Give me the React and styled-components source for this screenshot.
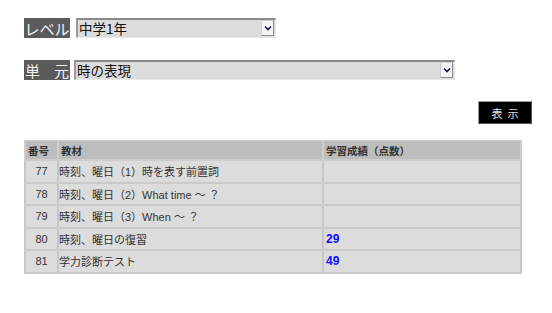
import React from "react";
import styled, { createGlobalStyle } from "styled-components";

const Global = createGlobalStyle`
  html, body { margin: 0; padding: 0; background: #ffffff; }
  body { font-family: "Liberation Sans", "Noto Sans CJK JP", sans-serif; }
`;

const Page = styled.div`
  width: 552px;
  height: 313px;
  box-sizing: border-box;
  padding: 18px 20px 0 24px;
  display: flex;
  flex-direction: column;
`;

const FieldRow = styled.div`
  display: flex;
  align-items: stretch;
  height: 20px;
  gap: ${(p) => p.$gap}px;
  margin-bottom: ${(p) => p.$mb}px;
`;

const Label = styled.div`
  width: 46px;
  height: 20px;
  box-sizing: border-box;
  background: #5b5b5b;
  color: #f2f2f2;
  font-family: "Noto Sans CJK JP", sans-serif;
  font-size: 15px;
  line-height: 1;
  display: flex;
  align-items: center;
  justify-content: ${(p) => (p.$spread ? "space-between" : "center")};
  padding: 0 ${(p) => (p.$spread ? 1 : 0)}px;
  white-space: nowrap;
`;

const SelectBox = styled.div`
  width: ${(p) => p.$w}px;
  height: 20px;
  box-sizing: border-box;
  display: flex;
  align-items: stretch;
  background: #dcdcdc;
  border-top: 2px solid #8a8a8a;
  border-left: 2px solid #9a9a9a;
  border-right: 1px solid #e8e8e8;
  border-bottom: 1px solid #e8e8e8;
`;

const NativeSelect = styled.select`
  flex: 1;
  appearance: none;
  -webkit-appearance: none;
  border: none;
  outline: none;
  background: transparent;
  font-family: "Noto Sans CJK JP", sans-serif;
  font-size: 13.5px;
  color: #111;
  padding: 0 0 0 1px;
  margin: 0;
  height: 100%;
  line-height: 17px;
`;

const ArrowBox = styled.div`
  width: 13px;
  margin: 0 1px 1px 0;
  box-sizing: border-box;
  background: #f4f4f4;
  border: 1px solid #8c8c8c;
  border-top-color: #cfcfcf;
  border-left-color: #cfcfcf;
  display: flex;
  align-items: center;
  justify-content: center;
`;

const ButtonRow = styled.div`
  display: flex;
  justify-content: flex-end;
  margin-bottom: 16px;
`;

const ShowButton = styled.button`
  width: 54px;
  height: 23px;
  background: #000;
  color: #e0e0e0;
  border: 1px solid #9a9a9a;
  border-right-color: #555;
  border-bottom-color: #555;
  font-family: "Noto Sans CJK JP", sans-serif;
  font-size: 11px;
  letter-spacing: 5px;
  padding: 0 0 0 5px;
  cursor: pointer;
`;

const Table = styled.table`
  width: 496px;
  border-collapse: collapse;
  table-layout: fixed;
  font-size: 11px;
  color: #333;
  border: 1px solid #c4c4c4;
`;

const Th = styled.th`
  height: 18px;
  background: #bdbdbd;
  text-align: left;
  font-weight: bold;
  padding: 0 0 0 2px;
  border: 2px solid #cdcdcd;
  border-top-width: 1px;
  color: #333;
  font-family: "Noto Sans CJK JP", sans-serif;
  font-size: 10.5px;
`;

const Td = styled.td`
  height: 20.5px;
  background: #dcdcdc;
  padding: 0;
  text-align: ${(p) => (p.$center ? "center" : "left")};
  border: 2px solid #c6c6c6;
  border-bottom-color: #cacaca;
  white-space: nowrap;
`;

const Score = styled.span`
  color: #1010ff;
  font-weight: bold;
  font-size: 12px;
  padding-left: 2px;
`;

const Chevron = () => (
  <svg width="8" height="6" viewBox="0 0 8 6">
    <path d="M1 1.5 L4 4.5 L7 1.5" fill="none" stroke="#1a1a3a" strokeWidth="1.6" />
  </svg>
);

const rows = [
  { no: 77, title: "時刻、曜日（1）時を表す前置詞", score: "" },
  { no: 78, title: "時刻、曜日（2）What time ～ ？", score: "" },
  { no: 79, title: "時刻、曜日（3）When ～ ？", score: "" },
  { no: 80, title: "時刻、曜日の復習", score: "29" },
  { no: 81, title: "学力診断テスト", score: "49" },
];

export default function App() {
  return (
    <>
      <Global />
      <Page>
        <FieldRow $gap={6} $mb={22}>
          <Label>レベル</Label>
          <SelectBox $w={200}>
            <NativeSelect defaultValue="中学1年">
              <option>中学1年</option>
            </NativeSelect>
            <ArrowBox>
              <Chevron />
            </ArrowBox>
          </SelectBox>
        </FieldRow>
        <FieldRow $gap={4} $mb={21}>
          <Label $spread>
            <span>単</span>
            <span>元</span>
          </Label>
          <SelectBox $w={381}>
            <NativeSelect defaultValue="時の表現">
              <option>時の表現</option>
            </NativeSelect>
            <ArrowBox>
              <Chevron />
            </ArrowBox>
          </SelectBox>
        </FieldRow>
        <ButtonRow>
          <ShowButton>表示</ShowButton>
        </ButtonRow>
        <Table>
          <colgroup>
            <col style={{ width: 33 }} />
            <col style={{ width: 265 }} />
            <col style={{ width: 198 }} />
          </colgroup>
          <thead>
            <tr>
              <Th>番号</Th>
              <Th>教材</Th>
              <Th>学習成績（点数）</Th>
            </tr>
          </thead>
          <tbody>
            {rows.map((r) => (
              <tr key={r.no}>
                <Td $center>{r.no}</Td>
                <Td>{r.title}</Td>
                <Td>{r.score && <Score>{r.score}</Score>}</Td>
              </tr>
            ))}
          </tbody>
        </Table>
      </Page>
    </>
  );
}
